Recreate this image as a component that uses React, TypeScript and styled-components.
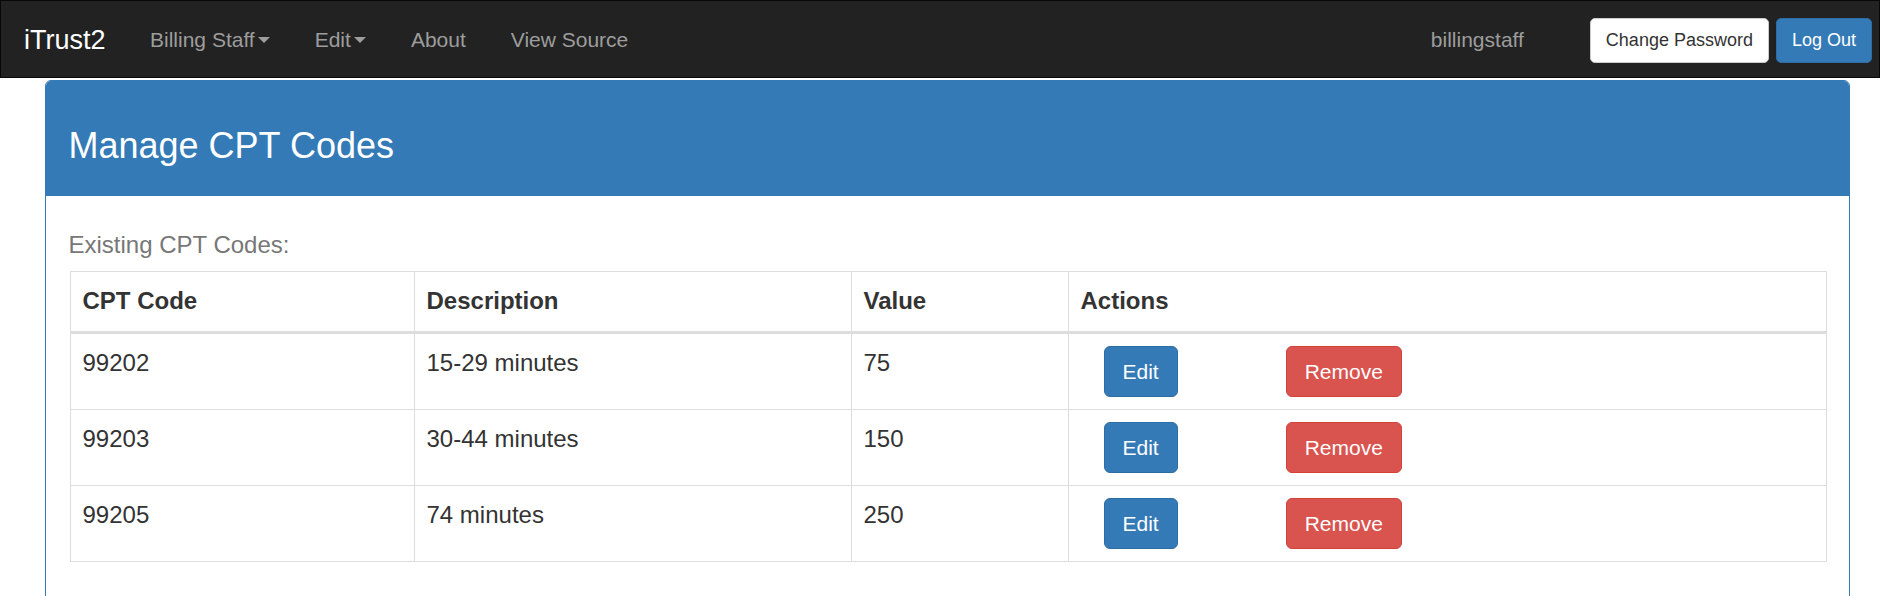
import React from "react";
import styled, { createGlobalStyle } from "styled-components";

const GlobalStyle = createGlobalStyle`
  html, body {
    margin: 0;
    padding: 0;
    background: #fff;
    font-family: "Liberation Sans", Arial, Helvetica, sans-serif;
    color: #333;
  }
  * { box-sizing: border-box; }
`;

const Navbar = styled.nav`
  display: flex;
  align-items: center;
  height: 78px;
  padding: 3px 7px 0 0;
  background: #222;
  border: 1px solid #080808;
`;

const Brand = styled.a`
  padding: 0 22px 2px 23px;
  font-size: 27px;
  line-height: 30px;
  color: #fff;
  text-decoration: none;
`;

const NavLink = styled.a`
  display: flex;
  align-items: center;
  padding: 0 22.5px 2px;
  font-size: 21px;
  line-height: 30px;
  color: #9d9d9d;
  text-decoration: none;
`;

const Caret = styled.span`
  display: inline-block;
  width: 0;
  height: 0;
  margin-left: 3px;
  border-top: 6px solid #9d9d9d;
  border-left: 6px solid transparent;
  border-right: 6px solid transparent;
`;

const Spacer = styled.div`
  flex: 1;
`;

const UserName = styled.span`
  margin-right: 66px;
  padding-bottom: 2px;
  font-size: 21px;
  line-height: 30px;
  color: #9d9d9d;
`;

const NavButtons = styled.div`
  display: flex;
  gap: 7px;
`;

const SmallButton = styled.button<{ $variant: "default" | "primary" }>`
  height: 45px;
  padding: 0 15px;
  font-family: inherit;
  font-size: 18px;
  line-height: 27px;
  border-radius: 5px;
  border: 1px solid ${(p) => (p.$variant === "primary" ? "#2e6da4" : "#ccc")};
  background: ${(p) => (p.$variant === "primary" ? "#337ab7" : "#fff")};
  color: ${(p) => (p.$variant === "primary" ? "#fff" : "#333")};
`;

const Main = styled.main`
  margin: 2px 30px 0 45px;
`;

const Panel = styled.section`
  border: 1px solid #337ab7;
  border-radius: 6px 6px 0 0;
  background: #fff;
  min-height: 560px;
`;

const PanelHeading = styled.div`
  padding: 15px 22.5px;
  background: #337ab7;
  border-radius: 5px 5px 0 0;
`;

const PanelTitle = styled.h3`
  margin: 30px 0 15px;
  font-size: 36px;
  font-weight: 400;
  line-height: 1.1;
  color: #fff;
`;

const PanelBody = styled.div`
  padding: 22.5px 22.5px 22.5px 23.5px;
`;

const Caption = styled.div`
  padding: 10px 0 9px;
  margin-left: -1px;
  font-size: 24px;
  line-height: 34px;
  color: #777;
`;

const Table = styled.table`
  width: 100%;
  border-collapse: collapse;
  border: 1px solid #ddd;
  font-size: 24px;
  line-height: 34px;
  color: #333;
`;

const Th = styled.th<{ $w?: number }>`
  width: ${(p) => (p.$w ? `${p.$w}px` : "auto")};
  padding: 12px 12px 13px;
  text-align: left;
  font-weight: 700;
  vertical-align: bottom;
  border: 1px solid #ddd;
  border-bottom: 3px solid #ddd;
`;

const Td = styled.td`
  padding: 12px;
  vertical-align: top;
  border: 1px solid #ddd;
`;

const Actions = styled.div`
  display: flex;
  gap: 108px;
  margin-left: 23px;
`;

const ActionButton = styled.button<{ $variant: "primary" | "danger" }>`
  height: 51px;
  padding: 0 18px;
  font-family: inherit;
  font-size: 21px;
  line-height: 30px;
  border-radius: 6px;
  color: #fff;
  background: ${(p) => (p.$variant === "primary" ? "#337ab7" : "#d9534f")};
  border: 1px solid ${(p) => (p.$variant === "primary" ? "#2e6da4" : "#d43f3a")};
`;

const codes = [
  { code: "99202", description: "15-29 minutes", value: "75" },
  { code: "99203", description: "30-44 minutes", value: "150" },
  { code: "99205", description: "74 minutes", value: "250" },
];

export default function App() {
  return (
    <>
      <GlobalStyle />
      <Navbar>
        <Brand>iTrust2</Brand>
        <NavLink>
          Billing Staff
          <Caret />
        </NavLink>
        <NavLink>
          Edit
          <Caret />
        </NavLink>
        <NavLink>About</NavLink>
        <NavLink>View Source</NavLink>
        <Spacer />
        <UserName>billingstaff</UserName>
        <NavButtons>
          <SmallButton $variant="default">Change Password</SmallButton>
          <SmallButton $variant="primary">Log Out</SmallButton>
        </NavButtons>
      </Navbar>
      <Main>
        <Panel>
          <PanelHeading>
            <PanelTitle>Manage CPT Codes</PanelTitle>
          </PanelHeading>
          <PanelBody>
            <Caption>Existing CPT Codes:</Caption>
            <Table>
              <thead>
                <tr>
                  <Th $w={344}>CPT Code</Th>
                  <Th $w={437}>Description</Th>
                  <Th $w={217}>Value</Th>
                  <Th>Actions</Th>
                </tr>
              </thead>
              <tbody>
                {codes.map((c) => (
                  <tr key={c.code}>
                    <Td>{c.code}</Td>
                    <Td>{c.description}</Td>
                    <Td>{c.value}</Td>
                    <Td>
                      <Actions>
                        <ActionButton $variant="primary">Edit</ActionButton>
                        <ActionButton $variant="danger">Remove</ActionButton>
                      </Actions>
                    </Td>
                  </tr>
                ))}
              </tbody>
            </Table>
          </PanelBody>
        </Panel>
      </Main>
    </>
  );
}
